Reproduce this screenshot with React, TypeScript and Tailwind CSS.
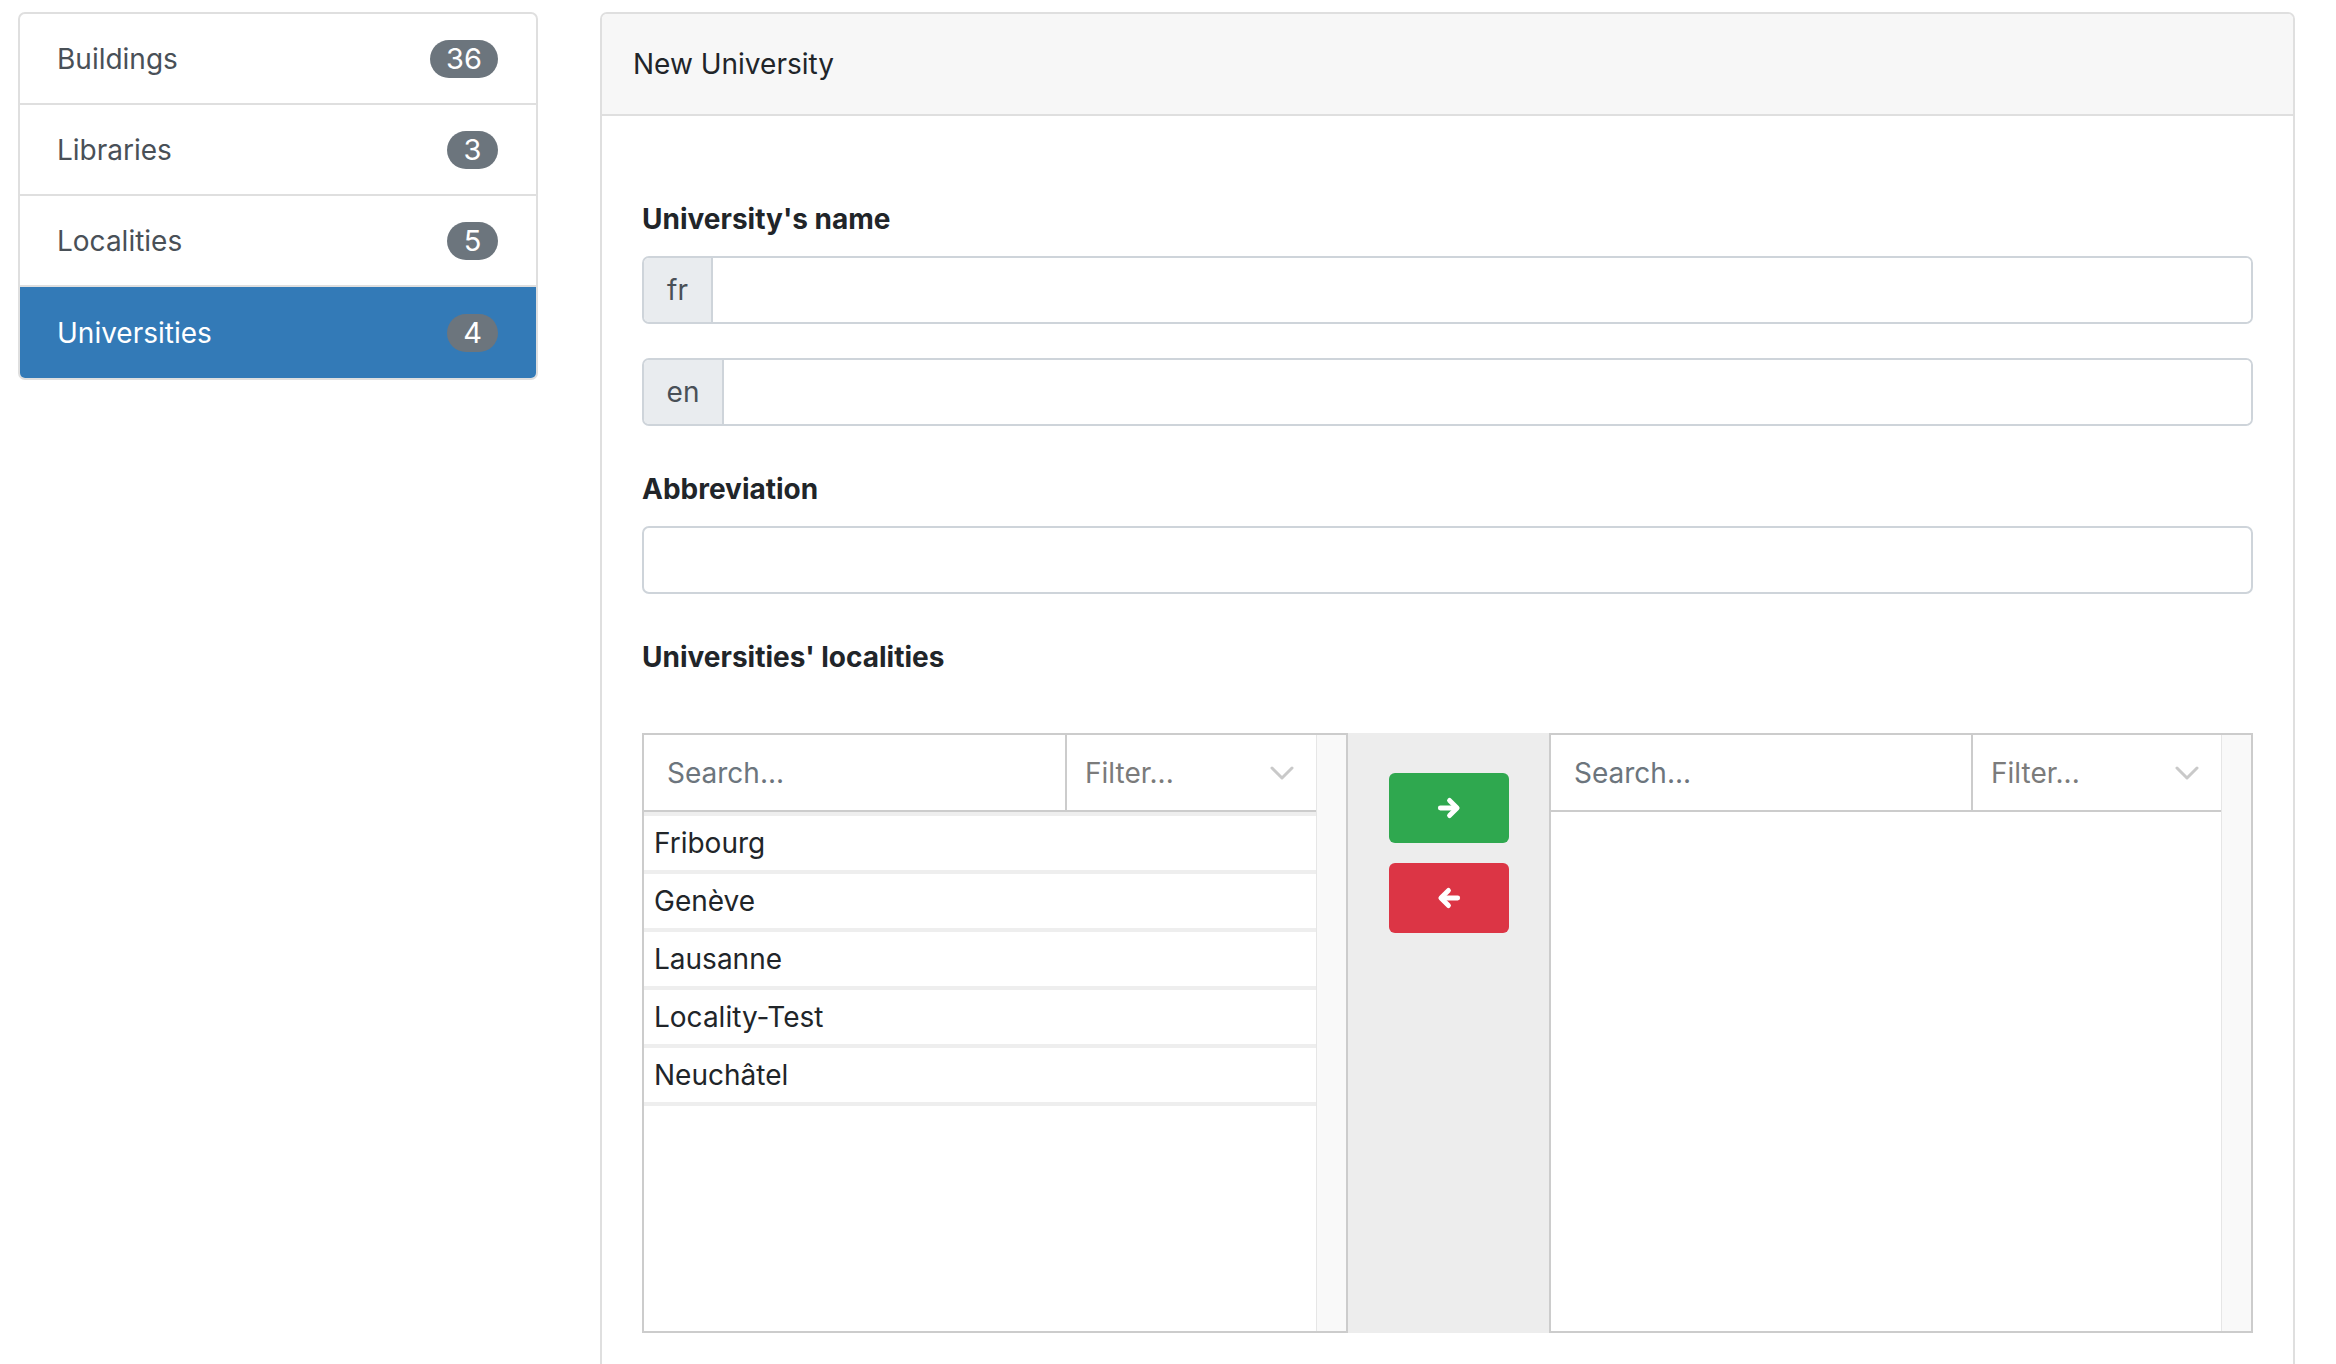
import React from "react";

const font = { fontFamily: "Inter, 'Noto Sans', sans-serif" };

function Arrow({ dir }: { dir: "left" | "right" }) {
  return (
    <svg width="26" height="26" viewBox="0 0 24 24" fill="none" stroke="white" strokeWidth="4.5" strokeLinecap="round" strokeLinejoin="round">
      {dir === "right" ? (
        <>
          <path d="M4 12H18.5" />
          <path d="M12.5 5L19.5 12L12.5 19" />
        </>
      ) : (
        <>
          <path d="M20 12H5.5" />
          <path d="M11.5 5L4.5 12L11.5 19" />
        </>
      )}
    </svg>
  );
}

function Chevron() {
  return (
    <svg width="24" height="14" viewBox="0 0 24 14" fill="none" stroke="#c9c9c9" strokeWidth="3" strokeLinecap="round" strokeLinejoin="round">
      <path d="M2 2L12 12L22 2" />
    </svg>
  );
}

function ListHeader({ searchW }: { searchW: string }) {
  return (
    <div className="flex h-[77px] border-b-2 border-[#cccccc]">
      <div className={`${searchW} flex items-center pl-[23px] text-[28px] text-[#6c757d]`}>Search...</div>
      <div className="flex-1 flex items-center justify-between border-l-2 border-[#cccccc] pl-[18px] pr-[22px] text-[28px] text-[#7b7b7b]">
        <span>Filter...</span>
        <Chevron />
      </div>
    </div>
  );
}

export default function App() {
  const side = [
    { name: "Buildings", n: "36" },
    { name: "Libraries", n: "3" },
    { name: "Localities", n: "5" },
  ];
  const items = ["Fribourg", "Genève", "Lausanne", "Locality-Test", "Neuchâtel"];
  return (
    <div className="w-[2336px] h-[1364px] overflow-hidden bg-white flex items-start" style={font}>
      {/* Sidebar */}
      <div className="ml-[18px] mt-[12px] w-[520px] border-2 border-[#dfdfdf] rounded-[7px] overflow-hidden">
        {side.map((s) => (
          <div key={s.name} className="h-[91px] flex items-center justify-between pl-[37px] pr-[38px] border-b-2 border-[#dfdfdf] text-[#495057] text-[28px]">
            <span>{s.name}</span>
            <span className="h-[38px] min-w-[51px] px-[16px] rounded-full bg-[#6c757d] text-white text-[29px] flex items-center justify-center">{s.n}</span>
          </div>
        ))}
        <div className="h-[91px] flex items-center justify-between pl-[37px] pr-[38px] bg-[#337ab7] text-white text-[28px]">
          <span>Universities</span>
          <span className="h-[38px] min-w-[51px] px-[16px] rounded-full bg-[#6c757d] text-white text-[29px] flex items-center justify-center">4</span>
        </div>
      </div>

      {/* Main card */}
      <div className="ml-[62px] mt-[12px] w-[1695px] h-[1400px] border-2 border-b-0 border-[#dfdfdf] rounded-t-[7px] overflow-hidden">
        <div className="h-[102px] bg-[#f7f7f7] border-b-2 border-[#dfdfdf] flex items-center pl-[31px] text-[28px] text-[#212529]">
          New University
        </div>
        <div className="px-[40px] pt-[81px] text-[#212529]">
          <div className="h-[44px] flex items-center font-bold text-[28px]">University's name</div>
          <div className="mt-[15px] h-[68px] flex border-2 border-[#ced4da] rounded-[7px] overflow-hidden">
            <div className="w-[69px] bg-[#e9ecef] border-r-2 border-[#ced4da] flex items-center justify-center text-[28px] text-[#495057]">fr</div>
            <div className="flex-1 bg-white" />
          </div>
          <div className="mt-[34px] h-[68px] flex border-2 border-[#ced4da] rounded-[7px] overflow-hidden">
            <div className="w-[80px] bg-[#e9ecef] border-r-2 border-[#ced4da] flex items-center justify-center text-[28px] text-[#495057]">en</div>
            <div className="flex-1 bg-white" />
          </div>
          <div className="mt-[41px] h-[44px] flex items-center font-bold text-[28px]">Abbreviation</div>
          <div className="mt-[15px] h-[68px] border-2 border-[#ced4da] rounded-[7px] bg-white" />
          <div className="mt-[41px] h-[44px] flex items-center font-bold text-[28px]">Universities' localities</div>

          {/* Dual list box */}
          <div className="mt-[54px] h-[600px] flex">
            <div className="w-[706px] h-full border-2 border-[#cccccc] flex">
              <div className="w-[672px] flex flex-col">
                <ListHeader searchW="w-[421px]" />
                {items.map((it) => (
                  <div key={it} className="h-[58px] border-t-4 border-[#eeeeee] flex items-center pl-[10px] text-[28px] text-[#212529]">
                    {it}
                  </div>
                ))}
                <div className="border-t-4 border-[#eeeeee]" />
              </div>
              <div className="flex-1 bg-[#f9f9f9] border-l border-[#e6e6e6]" />
            </div>
            <div className="w-[201px] h-full bg-[#ededed] flex flex-col items-center pt-[40px] gap-[20px]">
              <div className="w-[120px] h-[70px] rounded-[6px] bg-[#2fa84f] flex items-center justify-center">
                <Arrow dir="right" />
              </div>
              <div className="w-[120px] h-[70px] rounded-[6px] bg-[#dc3545] flex items-center justify-center">
                <Arrow dir="left" />
              </div>
            </div>
            <div className="flex-1 h-full border-2 border-[#cccccc] flex">
              <div className="w-[670px] flex flex-col">
                <ListHeader searchW="w-[420px]" />
              </div>
              <div className="flex-1 bg-[#f9f9f9] border-l border-[#e6e6e6]" />
            </div>
          </div>
        </div>
      </div>
    </div>
  );
}
